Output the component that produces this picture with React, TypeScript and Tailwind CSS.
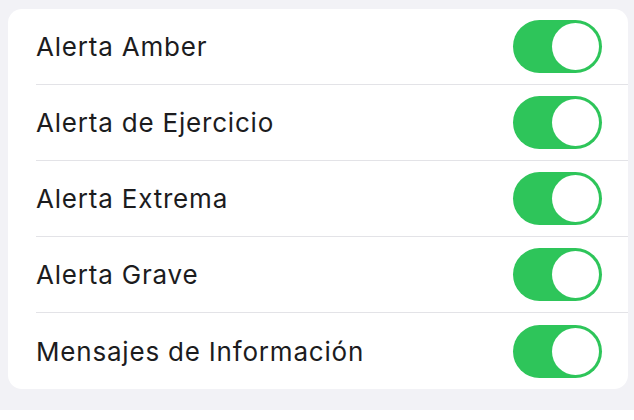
const items = [
  "Alerta Amber",
  "Alerta de Ejercicio",
  "Alerta Extrema",
  "Alerta Grave",
  "Mensajes de Información",
];

const Toggle = () => {
  return (
    <div className="flex h-[53px] w-[89px] items-center justify-end rounded-full bg-[#2ec55a] pr-[3px]">
      <div className="h-[47px] w-[47px] rounded-full bg-white ring-2 ring-[#2ec55a]" />
    </div>
  );
};

const App = () => {
  return (
    <div className="h-[420px] w-[634px] bg-white font-['Inter','Liberation_Sans',sans-serif]">
      <div className="h-[410px] bg-[#f2f2f6] pl-2 pr-[6px] pt-[9px]">
        <div className="rounded-[14px] bg-white pl-[28px]">
          {items.map((label, i) => (
            <div
              key={label}
              className={
                i < items.length - 1
                  ? "flex h-[76px] items-center justify-between border-b border-[#e3e3e7] pr-[26px]"
                  : "flex h-[76px] items-center justify-between pr-[26px]"
              }
            >
              <span className="text-[26px] tracking-[0.8px] text-[#1c1c1e]">{label}</span>
              <Toggle />
            </div>
          ))}
        </div>
      </div>
    </div>
  );
};

export default App;
